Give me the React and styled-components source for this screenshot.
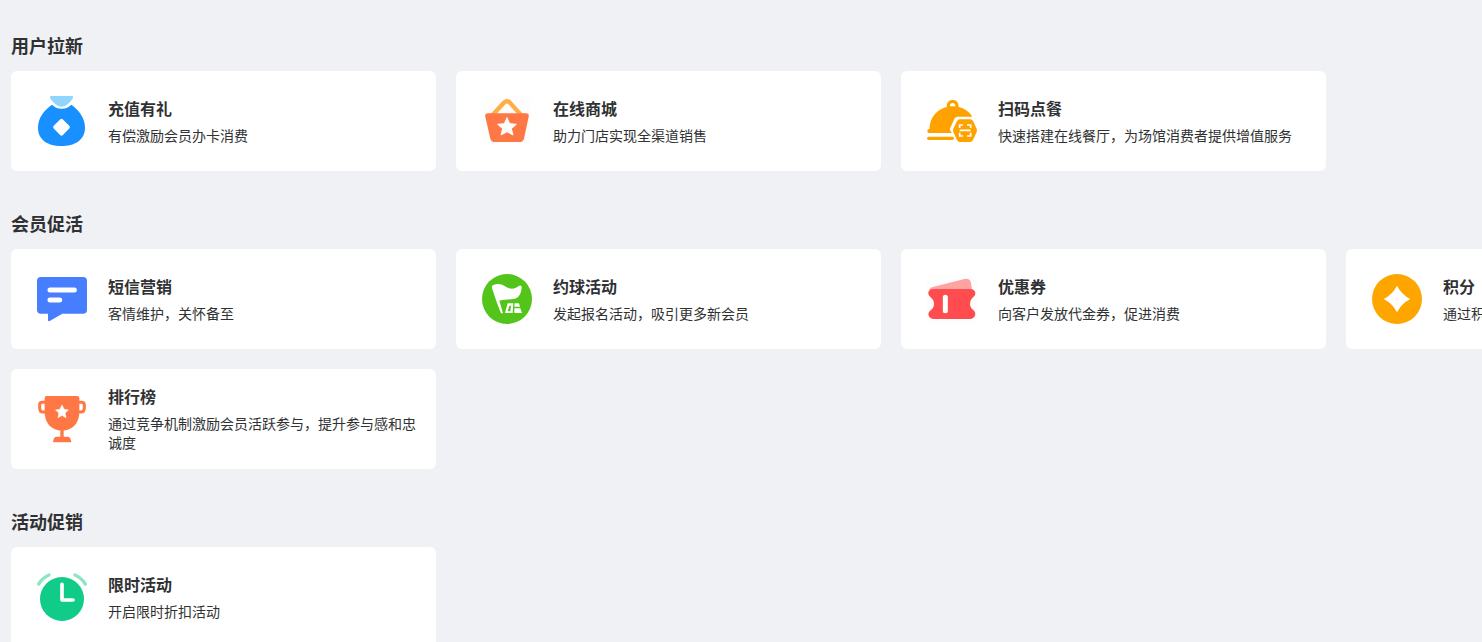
import styled, { createGlobalStyle } from 'styled-components'

const sections = [
  {
    title: '用户拉新',
    items: [
      { icon: 'bag', name: '充值有礼', desc: '有偿激励会员办卡消费' },
      { icon: 'basket', name: '在线商城', desc: '助力门店实现全渠道销售' },
      { icon: 'dish', name: '扫码点餐', desc: '快速搭建在线餐厅，为场馆消费者提供增值服务' },
    ],
  },
  {
    title: '会员促活',
    items: [
      { icon: 'message', name: '短信营销', desc: '客情维护，关怀备至' },
      { icon: 'flag', name: '约球活动', desc: '发起报名活动，吸引更多新会员' },
      { icon: 'coupon', name: '优惠券', desc: '向客户发放代金券，促进消费' },
      { icon: 'points', name: '积分', desc: '通过积分' },
      { icon: 'trophy', name: '排行榜', desc: '通过竞争机制激励会员活跃参与，提升参与感和忠诚度' },
    ],
  },
  {
    title: '活动促销',
    items: [
      { icon: 'clock', name: '限时活动', desc: '开启限时折扣活动' },
    ],
  },
]

const icons = {
  bag: (
    <>
      <path fill="#91d5ff" d="M40 0H107C109 3 108 8 104 12C96 22 87 32 74 32C61 32 52 22 43 12C39 8 38 3 40 0Z" />
      <path fill="#1890ff" d="M45 26C52 33 61 38 74 38C87 38 96 33 103 26C127 43 144 67 144 95C144 133 112 150 73 150C35 150 3 133 3 95C3 67 20 43 45 26Z" />
      <rect x="54" y="74" width="39" height="39" rx="6" fill="#fff" transform="rotate(45 73.5 93.5)" />
    </>
  ),
  basket: (
    <>
      <rect x="4" y="2" width="143" height="143" fill="#fdfdfd" />
      <path fill="none" stroke="#ffad45" strokeWidth="13" strokeLinejoin="round" d="M31 58L67 19Q75 12 83 19L118 58" />
      <path fill="#ff7745" d="M18 52H132Q142 52 140 62L126 128Q123 138 112 138H39Q28 138 25 128L10 62Q8 52 18 52Z" />
      <path fill="#fff" stroke="#fff" strokeWidth="3" strokeLinejoin="round" d="M75 65L83 83L103 85L88 98L93 117L75 107L57 117L62 98L47 85L67 83Z" />
    </>
  ),
  dish: (
    <>
      <circle cx="77" cy="29" r="13" fill="none" stroke="#ffa200" strokeWidth="10" />
      <path fill="#ffa200" d="M8 98C8 60 38 31 77 31C102 31 124 43 136 62H92Q86 62 83 67L68 100L74 111H4Q-2 105 4 100Z" />
      <path fill="none" stroke="#ffa200" strokeWidth="10" strokeLinecap="round" d="M5 127H76" />
      <path fill="#ffa200" d="M98 70H130Q135 70 138 75L149 98Q151 103 149 108L138 132Q135 138 130 138H98Q93 138 90 132L79 108Q77 103 79 98L90 75Q93 70 98 70Z" />
      <path fill="none" stroke="#fff" strokeWidth="5" d="M98 96V87H108M120 87H131V96M98 110V120H108M120 120H131V110M98 103H131" />
    </>
  ),
  message: (
    <>
      <path fill="#477dff" d="M12 9H138Q150 9 150 21V107Q150 119 138 119H76L38 141Q33 143 33 137V119H12Q0 119 0 107V21Q0 9 12 9Z" />
      <path stroke="#fff" strokeWidth="15" strokeLinecap="round" d="M39 48H112M39 78H68" />
    </>
  ),
  flag: (
    <>
      <circle cx="75" cy="75" r="75" fill="#52c41a" />
      <path fill="#fff" d="M30 42Q28 35 34 33C50 27 60 31 73 39C87 47 98 45 110 36Q120 32 119 42C117 51 117 61 107 70C94 81 78 72 52 80L63 118L57 118Q44 86 30 42Z" />
      <path fill="#fff" fillRule="evenodd" d="M77 88H94L92 117H69ZM82 95L77 112H85L87 95ZM98 88H111L114 98H97ZM97 103H115L120 117H97Z" />
    </>
  ),
  coupon: (
    <>
      <rect width="150" height="150" fill="#fdfdfd" />
      <path fill="#ffa3a1" d="M4 58Q5 42 17 39L112 15Q129 12 132 27L136 58Z" />
      <path fill="#ff4d4f" d="M18 45H131Q143 46 145 57Q146 65 139 69Q129 78 129 90Q129 101 139 108Q146 113 145 121Q143 134 130 135H19Q6 134 4 121Q4 113 11 109Q21 101 21 90Q21 78 11 70Q3 65 4 57Q6 46 18 45Z" />
      <path stroke="#fff" strokeWidth="15" strokeLinecap="round" d="M55 70V110" />
    </>
  ),
  points: (
    <>
      <circle cx="75" cy="75" r="75" fill="#ffa500" />
      <path fill="#fff" d="M75 35Q88 61 115 75Q88 89 75 115Q62 89 35 75Q62 61 75 35Z" />
    </>
  ),
  trophy: (
    <>
      <path fill="none" stroke="#ff7745" strokeWidth="9" d="M27 25H15Q8 25 8 33V42Q8 54 18 54H28M120 25H134Q142 25 142 33V42Q142 54 132 54H119" />
      <path fill="#ff7745" d="M29 6H121Q127 6 127 13V55C127 87 107 110 75 110C43 110 23 87 23 55V13Q23 6 29 6Z" />
      <path fill="#ff7745" d="M70 108H80V128H94Q101 129 103 145H48Q50 129 57 128H70Z" />
      <path fill="#fff" stroke="#fff" strokeWidth="2" strokeLinejoin="round" d="M75 33L81 46L94 48L84 57L87 71L75 64L63 71L66 57L56 48L69 46Z" />
    </>
  ),
  clock: (
    <>
      <circle cx="75" cy="81" r="66" fill="#10cc88" />
      <path fill="none" stroke="#8ce5c3" strokeWidth="10" strokeLinecap="round" d="M5 36Q17 17 36 9M114 9Q133 17 145 36" />
      <path fill="none" stroke="#fff" strokeWidth="11" strokeLinecap="round" strokeLinejoin="round" d="M75 37V84H108" />
    </>
  ),
}

const App = () => {
  return (
    <>
      <GlobalStyle />
      <Page>
        {sections.map((section) => (
          <Section key={section.title}>
            <SectionTitle>{section.title}</SectionTitle>
            <CardList>
              {section.items.map((item) => (
                <Card key={item.name}>
                  <Icon viewBox="0 0 150 150" aria-hidden="true">{icons[item.icon]}</Icon>
                  <Info>
                    <Name>{item.name}</Name>
                    <Desc>{item.desc}</Desc>
                  </Info>
                </Card>
              ))}
            </CardList>
          </Section>
        ))}
      </Page>
    </>
  )
}

export default App

const GlobalStyle = createGlobalStyle`
* {
    box-sizing: border-box;
}

body {
    margin: 0;
    background-color: #f0f1f5;
    color: #303133;
    font-family: "Noto Sans CJK SC", sans-serif;
}
`;

const Page = styled.main`
padding: 0 11px 20px;
overflow-x: auto;
scrollbar-width: none;
`;

const Section = styled.section`
padding-top: 32px;

& + & {
    padding-top: 39px;
}
`;

const SectionTitle = styled.h2`
margin: 0 0 13px;
font-size: 18px;
line-height: 26px;
font-weight: 700;
`;

/* four columns, the row scrolls sideways on narrow windows */
const CardList = styled.div`
display: grid;
grid-template-columns: repeat(4, 425px);
gap: 20px;
`;

const Card = styled.article`
display: flex;
align-items: center;
gap: 21px;
min-height: 100px;
padding: 16px 20px 16px 26px;
border-radius: 6px;
background-color: #fff;
`;

const Icon = styled.svg`
flex: none;
width: 50px;
height: 50px;
overflow: visible;
`;

const Info = styled.div`
min-width: 0;
`;

const Name = styled.h3`
margin: 0 0 7px;
font-size: 16px;
line-height: 21px;
font-weight: 700;
`;

const Desc = styled.p`
margin: 0;
font-size: 14px;
line-height: 19px;
`;
